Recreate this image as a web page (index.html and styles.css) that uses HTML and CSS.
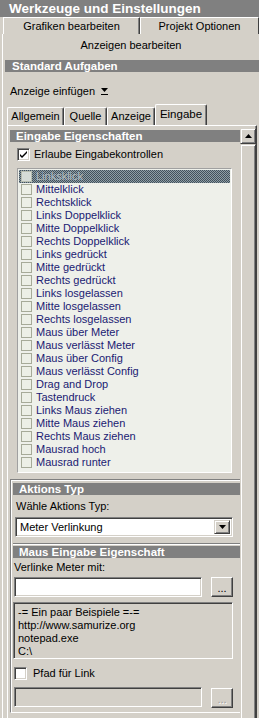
FILE: index.html
```html
<!DOCTYPE html>
<html lang="de">
<head>
  <meta charset="UTF-8" />
  <title>Werkzeuge und Einstellungen</title>
  <link rel="stylesheet" href="styles.css">
</head>
<body>
  <div class="title">Werkzeuge und Einstellungen</div>
  <div class="toptabs">
    <div class="ttab first">Grafiken bearbeiten</div>
    <div class="ttab">Projekt Optionen</div>
  </div>

  <div class="sheet">
    <div class="sheet-title">Anzeigen bearbeiten</div>

    <div class="ghead std-head">Standard Aufgaben</div>
    <div class="std-body">
      Anzeige einfügen
      <svg class="drop" width="8" height="9" viewBox="0 0 8 9"><path d="M0 1h7L3.5 5z" fill="#000"/><rect x="0" y="7" width="7" height="1" fill="#000"/></svg>
    </div>

    <div class="tabs">
      <div class="tab w1">Allgemein</div>
      <div class="tab w2">Quelle</div>
      <div class="tab w3">Anzeige</div>
      <div class="tab w4 active">Eingabe</div>
    </div>

    <div class="tabpage">
      <div class="content">
        <div class="ghead">Eingabe Eigenschaften</div>
        <div class="check-row">
          <span class="cbox"><svg width="9" height="9" viewBox="0 0 9 9"><path d="M1 4l2 2 5-5v2L3 8 1 6z" fill="#000"/></svg></span>
          Erlaube Eingabekontrollen
        </div>
        <ul class="list">
          <li class="sel"><span class="lbox"></span>Linksklick</li>
          <li><span class="lbox"></span>Mittelklick</li>
          <li><span class="lbox"></span>Rechtsklick</li>
          <li><span class="lbox"></span>Links Doppelklick</li>
          <li><span class="lbox"></span>Mitte Doppelklick</li>
          <li><span class="lbox"></span>Rechts Doppelklick</li>
          <li><span class="lbox"></span>Links gedrückt</li>
          <li><span class="lbox"></span>Mitte gedrückt</li>
          <li><span class="lbox"></span>Rechts gedrückt</li>
          <li><span class="lbox"></span>Links losgelassen</li>
          <li><span class="lbox"></span>Mitte losgelassen</li>
          <li><span class="lbox"></span>Rechts losgelassen</li>
          <li><span class="lbox"></span>Maus über Meter</li>
          <li><span class="lbox"></span>Maus verlässt Meter</li>
          <li><span class="lbox"></span>Maus über Config</li>
          <li><span class="lbox"></span>Maus verlässt Config</li>
          <li><span class="lbox"></span>Drag and Drop</li>
          <li><span class="lbox"></span>Tastendruck</li>
          <li><span class="lbox"></span>Links Maus ziehen</li>
          <li><span class="lbox"></span>Mitte Maus ziehen</li>
          <li><span class="lbox"></span>Rechts Maus ziehen</li>
          <li><span class="lbox"></span>Mausrad hoch</li>
          <li><span class="lbox"></span>Mausrad runter</li>
        </ul>

        <div class="lower">
          <div class="ghead">Aktions Typ</div>
          <div class="label lbl-action">Wähle Aktions Typ:</div>
          <div class="select">
            <span class="select-text">Meter Verlinkung</span>
            <span class="select-btn"><svg width="7" height="4" viewBox="0 0 7 4"><path d="M0 0h7L3.5 4z" fill="#000"/></svg></span>
          </div>

          <div class="sect">
            <div class="ghead">Maus Eingabe Eigenschaft</div>
            <div class="label">Verlinke Meter mit:</div>
            <div class="field-row">
              <div class="field"></div>
              <div class="btn">...</div>
            </div>
            <div class="memo">
              -= Ein paar Beispiele =-=<br>
              http://www.samurize.org<br>
              notepad.exe<br>
              C:\
            </div>
            <div class="check-row path-row">
              <span class="cbox"></span>
              Pfad für Link
            </div>
            <div class="field-row disabled-row">
              <div class="field off"></div>
              <div class="btn off">...</div>
            </div>
          </div>
        </div>
      </div>

      <div class="vscroll">
        <div class="sbtn"><svg width="7" height="4" viewBox="0 0 7 4"><path d="M3.5 0L7 4H0z" fill="#000"/></svg></div>
        <div class="thumb"></div>
      </div>
    </div>
  </div>
</body>
</html>
```

FILE: styles.css
```css
*{margin:0;padding:0;box-sizing:border-box;}
body{width:259px;height:718px;overflow:hidden;background:#d4d0c8;color:#000;font:11px "Liberation Sans",Arial,sans-serif;}

.title{height:17px;background:#808080;color:#fff;font-weight:bold;font-size:13.5px;line-height:17px;padding-left:9px;}

.toptabs{display:flex;height:17px;padding-left:3px;}
.ttab{flex:1;border-top:1px solid #fff;border-left:1px solid #fff;border-right:1px solid #404040;text-align:center;line-height:17px;}
.ttab.first{flex:0 0 137px;box-shadow:inset -1px 0 #808080;}

.sheet{margin-left:2px;border-left:1px solid #fff;}
.sheet-title{height:22px;line-height:22px;text-align:center;}

.ghead{height:12px;line-height:12px;background:#808080;color:#fff;font-weight:bold;font-size:11.5px;padding-left:6px;}
.std-head{margin:4px 0 0 2px;padding-left:7px;}
.std-body{height:31px;padding:7px 0 0 7px;line-height:13px;display:flex;align-items:center;gap:6px;}
.drop{margin-top:1px;}

.tabs{display:flex;align-items:flex-end;height:22px;padding-left:4px;}
.tab{height:18px;line-height:17px;text-align:center;border-top:1px solid #fff;border-left:1px solid #fff;border-right:1px solid #404040;box-shadow:inset -1px 0 #808080;border-radius:2px 2px 0 0;}
.tab.active{height:21px;line-height:18px;font-size:11.5px;}
.w1{width:57px;}
.w2{width:43px;}
.w3{width:48px;}
.w4{width:52px;}

.tabpage{display:flex;margin-left:4px;width:250px;height:600px;border-top:1px solid #fff;border-left:1px solid #fff;border-right:1px solid #404040;box-shadow:inset -1px 0 #808080;}
.content{width:232px;padding:4px 0 0 2px;}

.check-row{display:flex;align-items:center;gap:4px;height:13px;line-height:13px;margin:6px 0 0 7px;}
.cbox{width:13px;height:13px;background:#fff;border:1px solid;border-color:#808080 #fff #fff #808080;box-shadow:inset 1px 1px #404040,inset -1px -1px #d4d0c8;display:flex;align-items:center;justify-content:center;}

.list{list-style:none;margin:7px 0 0 7px;width:215px;height:305px;padding:1px 1px;background:#eef0ea;border:1px solid;border-color:#a0a0a0 #fff #fff #a0a0a0;color:#1a1a72;}
.list li{height:13px;line-height:13px;display:flex;align-items:center;gap:4px;padding-left:2px;}
.lbox{width:11px;height:11px;border:1px solid #a6aa98;background:#ecefe6;}
.list li.sel{background:repeating-conic-gradient(#41505c 0 25%,#8e9da4 0 50%) 0 0/2px 2px;color:#b0bcc2;}
.list li.sel .lbox{background:#d6dcd8;border-color:#b8bdb0;}

.lower{margin-top:6px;border-top:1px solid #808080;border-left:1px solid #808080;border-bottom:1px solid #fff;box-shadow:inset 1px 1px #fff;padding:3px 0 4px 2px;}
.label{height:13px;line-height:13px;margin-top:5px;padding-left:3px;}
.select{display:flex;justify-content:space-between;margin:4px 0 0 2px;width:218px;height:20px;background:#fff;border:1px solid;border-color:#808080 #fff #fff #808080;box-shadow:inset 1px 1px #404040,inset -1px -1px #d4d0c8;padding:2px;}
.select-text{line-height:14px;padding-left:2px;}
.select-btn{width:16px;height:14px;display:flex;align-items:center;justify-content:center;background:#d4d0c8;border:1px solid;border-color:#d4d0c8 #404040 #404040 #d4d0c8;box-shadow:inset 1px 1px #fff,inset -1px -1px #808080;}

.sect{margin-top:6px;border-top:1px solid #808080;box-shadow:inset 0 1px #fff;padding-top:2px;}
.sect .label{margin-top:3px;padding-left:1px;}
.field-row{display:flex;gap:9px;margin:3px 0 0 1px;}
.field{width:188px;height:20px;background:#fff;border:1px solid;border-color:#808080 #fff #fff #808080;box-shadow:inset 1px 1px #404040,inset -1px -1px #d4d0c8;}
.field.off{background:#d4d0c8;}
.btn{width:22px;height:20px;text-align:center;line-height:20px;font-size:11px;border:1px solid;border-color:#fff #404040 #404040 #fff;box-shadow:inset -1px -1px #808080;}
.btn.off{color:#a0a0a0;text-shadow:1px 1px #fff;margin-top:1px;}

.memo{margin-top:5px;width:220px;height:57px;padding:3px 4px;line-height:13px;border:1px solid;border-color:#808080 #fff #fff #808080;box-shadow:inset 1px 1px #404040,inset -1px -1px #d4d0c8;}
.path-row{margin:8px 0 0 1px;gap:6px;}
.disabled-row{margin-top:7px;}

.vscroll{width:16px;margin-top:2px;display:flex;flex-direction:column;}
.sbtn{height:16px;display:flex;align-items:center;justify-content:center;border:1px solid;border-color:#d4d0c8 #404040 #404040 #d4d0c8;box-shadow:inset 1px 1px #fff,inset -1px -1px #808080;}
.thumb{flex:1;border:1px solid;border-color:#d4d0c8 #404040 #404040 #d4d0c8;box-shadow:inset 1px 1px #fff,inset -1px -1px #808080;}
```
